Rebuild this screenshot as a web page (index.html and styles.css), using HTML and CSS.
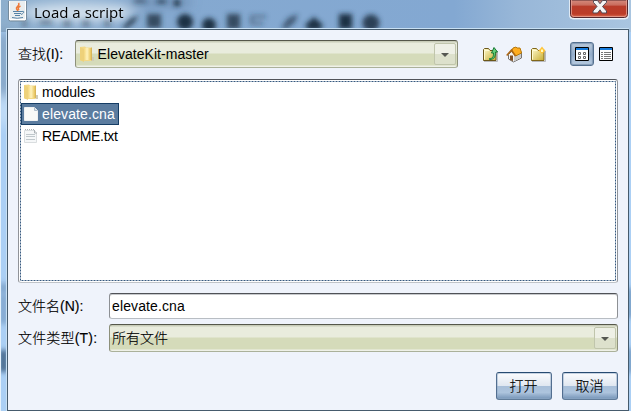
FILE: index.html
```html
<!DOCTYPE html>
<html lang="zh-CN">
<head>
<meta charset="utf-8">
<title>Load a script</title>
<link rel="stylesheet" href="styles.css">
</head>
<body>
<div class="window">
  <svg class="glass" width="631" height="411" viewBox="0 0 631 411" aria-hidden="true">
    <defs>
      <filter id="soft" x="-50%" y="-50%" width="200%" height="200%"><feGaussianBlur stdDeviation="2.5"/></filter>
      <filter id="haze" x="-50%" y="-50%" width="200%" height="200%"><feGaussianBlur stdDeviation="6"/></filter>
      <linearGradient id="air" x1="0" x2="1" y1="0" y2="0">
        <stop offset="0" stop-color="#8eafcd"/><stop offset=".25" stop-color="#85a9d0"/><stop offset=".72" stop-color="#83a8d2"/><stop offset=".82" stop-color="#98b7d8"/><stop offset="1" stop-color="#a9c5e0"/>
      </linearGradient>
    </defs>
    <rect width="631" height="411" fill="#abcff4"/>
    <rect width="631" height="32" fill="url(#air)"/>
    <g filter="url(#haze)">
      <ellipse cx="78" cy="12" rx="58" ry="10" fill="#c8d9e9"/>
      <path d="M130 0h60v4h-60z" fill="#526f91"/>
      <path d="M0 32h7v65H0z" fill="#65809c"/>
      <path d="M0 97h7v28H0z" fill="#d5e8f8"/>
    </g>
    <g filter="url(#soft)" fill="#1f3245">
      <path d="M134 0h12v2h-12zM157 0h9v3h-9zM174 0h6v6h-6z"/>
      <path d="M22 20h5v7h-5zM40 19h12v6H40zM63 20h8v7h-8zM82 20h8v7h-8zM104 19h7v8h-7z" opacity=".38"/>
      <path d="M122 28l8-9 9-4-5 8-8 6z" opacity=".85"/>
      <path d="M147 14h14v14h-14z" opacity=".8"/>
      <circle cx="185" cy="22" r="8"/><circle cx="209" cy="25" r="7"/>
      <path d="M227 14h13v15h-13z" opacity=".8"/>
      <path d="M250 15h16v3h-13v4h10v3h-13z" opacity=".45"/>
      <path d="M281 28l7-10 10-4-3 8-8 7z" opacity=".65"/>
      <path d="M305 25l9-8 9 8-3 5h-12z"/>
      <path d="M339 14h13v15h-13z"/><circle cx="371" cy="23" r="8.500" opacity=".88"/>
      <path d="M0 283h7v10H0z" fill="#6c91b8" opacity=".7"/>
      <path d="M0 294h7v30H0z" fill="#7297be" opacity=".7"/>
      <path d="M0 350h7v22H0z" fill="#37597c" opacity=".9"/>
      <path d="M629 288h3v30h-3zM629 348h3v25h-3z" fill="#315d89" opacity=".8"/>
    </g>
    <path d="M.5 0v411" stroke="#e5f1fb"/>
    <path d="M6.500 411V28.500H628.500V411" fill="none" stroke="#c8e0f3"/>
  </svg>

  <header class="titlebar">
    <svg class="java" width="20" height="21" viewBox="0 0 20 21" aria-hidden="true">
      <rect x=".5" y="-2.500" width="18" height="22.500" rx="2" fill="#e9eef0" stroke="#758b9d"/>
      <path d="M1.500 0v18.500h16V0" fill="none" stroke="#fff"/>
      <path d="M10.500 2c2 3-3 3.500-2 6l1.500 2M12.500 5c-3 1.500-2.500 2.500-1.500 4" fill="none" stroke="#ed7b3b" stroke-width="1.500"/>
      <path d="M5 10.500h9M6 12.500h7M7 14.500h5M4 16.500q5 1.500 11 0M14 10.500c3-1 2 2-1 3" fill="none" stroke="#5683a6"/>
    </svg>
    <h1 class="title">Load a script</h1>
    <svg class="close" width="60" height="20" viewBox="0 0 60 20" role="img" aria-label="Close">
      <defs><linearGradient id="red" x1="0" y1="0" x2="0" y2="1"><stop offset="0" stop-color="#d58b7e"/><stop offset=".3" stop-color="#c96b5c"/><stop offset=".34" stop-color="#b83c2b"/><stop offset=".8" stop-color="#bc3c27"/><stop offset="1" stop-color="#df7559"/></linearGradient></defs>
      <path d="M.5 0v15.500q0 3.500 3.500 3.500h52q3.500 0 3.500-3.500V0" fill="#fff" stroke="#dfe9f3"/>
      <path d="M1.500 0v14.500q0 3 3 3h51q3 0 3-3V0z" fill="url(#red)" stroke="#55282d"/>
      <path d="M2.500 0v14q0 2.500 2.500 2.500h50q2.500 0 2.500-2.500V0" fill="none" stroke="#e6a092" stroke-opacity=".8"/>
      <path d="M24.500.5h4l2.500 3.200L33.500.5h4v1.800l-4 4.200 4 4.500v2h-4.500L31 9.800l-2.500 3.200H24v-2l4-4.500-3.500-4z" fill="#f4f4f4" stroke="#564a54"/>
    </svg>
  </header>

  <main class="dialog">
    <div class="lookup">
      <span class="label look-label">查找(I):</span>
      <div class="combo look-combo">
        <svg class="folder" width="16" height="16" viewBox="0 0 16 16" aria-hidden="true"><use href="#folder"/></svg>
        <span class="combo-text">ElevateKit-master</span><span class="arrow"></span>
      </div>
      <div class="tools">
        <svg width="17" height="17" viewBox="0 0 17 17" role="img" aria-label="Up one level">
          <path d="M2 15.500h13.500V5" fill="none" stroke="#b7b9bd"/>
          <path d="M1.500 14.500v-11l1-1h4l1.500 2h6v10z" fill="url(#gold)" stroke="#6b5619"/>
          <path d="M2.500 13.500v-9h5" fill="none" stroke="#fffbd0"/>
          <path d="M7.500 12.500c3.500.2 4-2 4-5.500h-2L12 1.500 15.500 6h-2c0 4.500-1 7.500-6 7.500z" fill="#66cf7b" stroke="#167832"/>
        </svg>
        <svg width="17" height="17" viewBox="0 0 17 17" role="img" aria-label="Home">
          <path d="M2.500 8.500v4.500l5 3 8-4V6L6 5z" fill="#f4f4f4" stroke="#77736f"/>
          <path d="M8 15.500v-5l7-4v5z" fill="#c8c9ca"/>
          <path d="M5.500 5.500L7 2l3-1 1 1h3l1 3 .5 2-6 3z" fill="#ffad20" stroke="#b67809"/>
          <path d="M.7 9.500L5.500 4l4 6" fill="none" stroke="#ad6614" stroke-width="1.500"/>
          <path d="M4 14V9.500h3V15" fill="#815228"/>
        </svg>
        <svg width="17" height="17" viewBox="0 0 17 17" role="img" aria-label="New folder">
          <path d="M2 15.500h13.500V5" fill="none" stroke="#b7b9bd"/>
          <path d="M1.500 14.500v-11l1-1h4l1.500 2h6v10z" fill="url(#gold)" stroke="#806619"/>
          <path d="M2.500 13.500v-9h5" fill="none" stroke="#fffbd0"/>
          <path d="M12 .5L13.500 2.500 15.500 4.500 13.500 6.500 12 8 10.500 6.500 8.500 4.500 10.500 2.500z" fill="#ffc438"/>
          <path d="M11 3.500h2v2.500h-2z" fill="#fffbc0"/>
        </svg>
      </div>
      <div class="views">
        <span class="view selected"><svg width="14" height="14" viewBox="0 0 14 14" role="img" aria-label="List view">
          <path d="M.5.500h13v13H.5z" fill="#fff" stroke="#000"/><path d="M1 1h12v2H1z" fill="#167bdc"/>
          <path d="M3.500 5.500h2v2h-2zM8.500 5.500h2v2h-2zM3.500 9.500h2v2h-2zM8.500 9.500h2v2h-2z" fill="#fff" stroke="#666"/>
        </svg></span>
        <span class="view"><svg width="14" height="14" viewBox="0 0 14 14" role="img" aria-label="Details view">
          <path d="M.5.500h13v13H.5z" fill="#fff" stroke="#000"/><path d="M1 1h12v2H1z" fill="#167bdc"/>
          <path d="M2 5.500h2m1 0h7M2 7.500h2m1 0h7M2 9.500h2m1 0h7M2 11.500h2m1 0h7" stroke="#777"/>
        </svg></span>
      </div>
    </div>

    <div class="listbox">
      <ul class="files">
        <li class="file"><svg class="folder" width="16" height="16" viewBox="0 0 16 16" aria-hidden="true"><use href="#folder"/></svg>modules</li>
        <li class="file chosen"><svg width="16" height="16" viewBox="0 0 16 16" aria-hidden="true"><path d="M1.500 1.500h10l3 3v10h-13z" fill="#f8f9f8" stroke="#eef0f1"/><path d="M11.500 1.500v3h3" fill="#dce2e8" stroke="#aebdca"/></svg>elevate.cna</li>
        <li class="file readme"><svg width="16" height="16" viewBox="0 0 16 16" aria-hidden="true"><path d="M1.500 2.500h10l2 2v10h-12z" fill="#f5f7f8" stroke="#d9dddf"/><path d="M2 1.500h10" stroke="#aeb4b7" stroke-dasharray="1 1"/><path d="M3 6.500h9M3 8.500h9M3 11.500h9" stroke="#c0c8cc"/><path d="M11.500 2v3H14" fill="none" stroke="#abb1b5"/></svg>README.txt</li>
      </ul>
      <svg class="focus" width="598" height="202" viewBox="0 0 598 202" aria-hidden="true"><path d="M1.500 1.500H596.500V200.500H1.500z" fill="none" stroke="#36597f" stroke-dasharray="2 1"/></svg>
    </div>

    <div class="form-row name-row"><span class="label">文件名(N):</span><div class="input">elevate.cna</div></div>
    <div class="form-row type-row"><span class="label">文件类型(T):</span><div class="combo"><span class="combo-text">所有文件</span><span class="arrow"></span></div></div>
    <footer class="actions"><button class="button">打开</button><button class="button">取消</button></footer>
  </main>

  <svg class="symbols" width="0" height="0" aria-hidden="true">
    <defs>
      <linearGradient id="gold" x1="0" y1="0" x2="1" y2="1"><stop stop-color="#fffbd0"/><stop offset="1" stop-color="#c8ac2f"/></linearGradient>
      <linearGradient id="leaf" x1="0" x2="1" y1="0" y2="0"><stop stop-color="#f5d77c"/><stop offset=".45" stop-color="#fff2bc"/><stop offset="1" stop-color="#e7c35a"/></linearGradient>
      <symbol id="folder" viewBox="0 0 16 16"><path d="M1 1l5-.5 1 1h5V15H2l-1-1z" fill="#f3d987"/><path d="M5 2h7v12H6z" fill="url(#leaf)"/><path d="M1 1l4 2v13l-4-2z" fill="#eed17a"/><path d="M12.500 1.500V14.500" stroke="#d9b65a"/><path d="M13 11v4h2v-4" fill="#cfcbb8"/></symbol>
    </defs>
  </svg>
</div>
</body>
</html>
```

FILE: styles.css
```css
* { box-sizing: border-box; }
body { margin: 0; overflow: hidden; color: #000; font: 14px/18px "Liberation Sans", "Noto Sans CJK SC", sans-serif; }
.window { position: relative; width: 631px; height: 411px; overflow: hidden; }
.glass { position: absolute; inset: 0; }
.symbols { position: absolute; }
.titlebar { position: relative; display: flex; height: 29px; padding-left: 9px; }
.java { margin-top: 1px; margin-left: -1px; }
.title { margin: 2px 0 0 6px; font: 400 15px/21px "Open Sans", sans-serif; letter-spacing: .02px; text-shadow: 0 0 8px #fff; white-space: nowrap; }
.close { margin-left: auto; margin-right: 2px; }
.dialog { position: relative; display: flex; flex-direction: column; width: 622px; height: 382px; margin-left: 7px; padding: 10px 10px 0; border: 1px solid #465b6d; background: #eff3fb; }
.lookup { display: flex; height: 28px; align-items: center; }
.label { font-weight: 300; white-space: nowrap; -webkit-text-stroke: .15px #000; }
.look-label { width: 57px; }
.combo { display: flex; position: relative; height: 28px; align-items: center; border: 1px solid #8d907b; border-top-color: #55574a; border-bottom-color: #abb19a; border-radius: 3px; background: linear-gradient(#c8ccb8 0 1px, #e9ecdd 2px 12px, #d5dbba 13px 24px, #eff1e8 25px); }
.look-combo { width: 383px; padding-left: 3px; flex: none; }
.look-combo .combo-text { margin-left: 3px; letter-spacing: .04px; }
.arrow { position: relative; width: 22px; height: 22px; margin: 0 1px 0 auto; border: 1px solid #c0c5ac; border-radius: 2px; background: linear-gradient(#eef0e6 0 10px, #dde1cc 10px); }
.arrow::after { content: ""; position: absolute; top: 9px; left: 6px; border: 4px solid transparent; border-top-color: #555751; border-bottom-width: 0; }
.tools { display: flex; gap: 7px; width: 89px; margin: 0 0 0 24px; }
.views { display: flex; }
.view { display: grid; place-items: center; width: 24px; height: 24px; border: 1px solid transparent; }
.view.selected { border-color: #54708f; border-radius: 3px; background: linear-gradient(#bac9da, #95aecb 52%, #b9cde2); box-shadow: inset 0 0 1px 1px #8299b5; }
.listbox { position: relative; height: 204px; margin-top: 11px; padding: 1px 2px; border: 1px solid #909398; border-top-color: #51545a; border-bottom-color: #bfc3c8; border-radius: 3px; background: #fff; }
.files { margin: 0; padding: 0; list-style: none; }
.focus { position: absolute; inset: 0; pointer-events: none; }
.file { display: flex; position: relative; z-index: 1; align-items: center; width: max-content; height: 22px; padding: 0 4px 0 2px; white-space: nowrap; }
.file svg { margin-right: 3px; }
.chosen { padding: 0 3px 0 1px; border: 1px solid #153d65; background: #5b7c9f; color: #fff; letter-spacing: .12px; }
.readme { letter-spacing: -.3px; }
.form-row { display: grid; grid-template-columns: 91px 509px; align-items: center; }
.name-row { margin-top: 10px; }
.type-row { margin-top: 5px; }
.type-row .label { letter-spacing: .18px; }
.input { height: 26px; padding: 3px 2px; border: 1px solid #8d9094; border-top-color: #505257; border-bottom-color: #b8bdc3; border-radius: 3px; background: #fff; box-shadow: inset 0 1px #c7c9cc; letter-spacing: .12px; }
.type-row .combo { padding-left: 2px; font-weight: 300; -webkit-text-stroke: .15px #000; }
.actions { display: flex; justify-content: flex-end; gap: 10px; margin-top: 20px; }
.button { width: 56px; height: 28px; padding: 0 1px 0 0; border: 1px solid #526e90; border-top-color: #274b71; border-bottom-color: #617c99; border-radius: 3px; background: linear-gradient(#fbfcfe, #e0e7f0 49%, #a8bfd9 51%, #adc4dd 75%, #7594b7); box-shadow: inset 0 0 0 1px #91a9c580; color: #000; font: inherit; font-weight: 300; -webkit-text-stroke: .15px #000; }
```
